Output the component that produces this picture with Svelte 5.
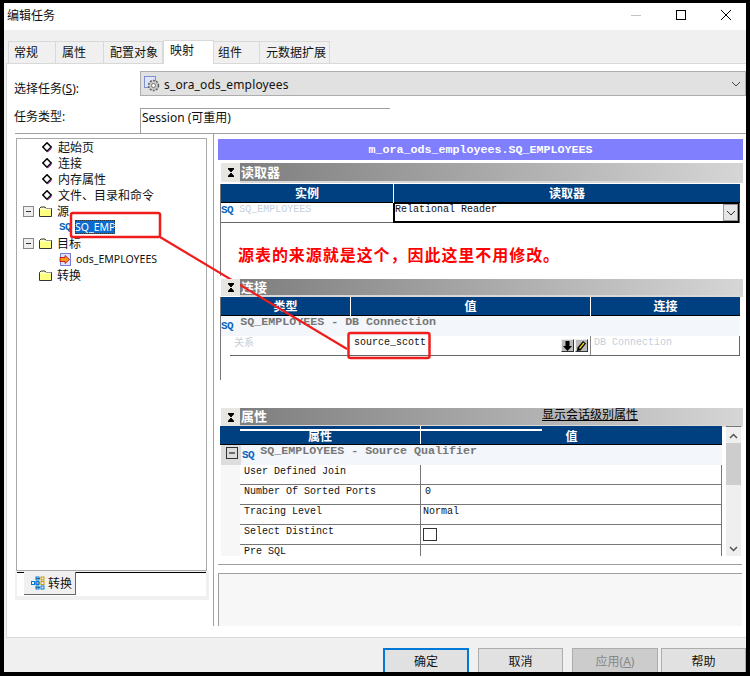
<script>
    const tabs = ['常规', '属性', '配置对象', '映射', '组件', '元数据扩展'];
    const pages = ['起始页', '连接', '内存属性', '文件、目录和命令'];
    const props = [
        { name: 'User Defined Join', value: '' },
        { name: 'Number Of Sorted Ports', value: '0', indent: true },
        { name: 'Tracing Level', value: 'Normal' },
        { name: 'Select Distinct', check: true },
        { name: 'Pre SQL', value: '' }
    ];
</script>

{#snippet diamond()}
    <svg class="tree-icon" width="10" height="11" viewBox="0 0 10 11">
        <path d="M5 .8 9.200 5 5 9.200.8 5z" fill="#fff" stroke="#000" stroke-width="1.500"/>
        <path d="M5.500 9.500 9.500 5.500V7L5.500 10.500z" fill="#7b2a8c"/>
    </svg>
{/snippet}

{#snippet folder()}
    <svg class="tree-icon" width="13" height="11" viewBox="0 0 13 11">
        <path d="M.5 2.500 2 1h4l1 1.500h5.500v8H.5z" fill="#ffff80" stroke="#333"/>
        <path d="M1 3h11" stroke="#fff"/>
    </svg>
{/snippet}

{#snippet toggle()}
    <span class="toggle">
        <svg width="9" height="9" viewBox="0 0 9 9"><path d="M2 4.500h5" stroke="#333"/></svg>
    </span>
{/snippet}

{#snippet sectionBar(label, link)}
    <div class="bar">
        <button class="bar-button" aria-label="折叠">
            <svg width="8" height="9" viewBox="0 0 8 9"><path d="M1 .5h6M1 8.500h6M1.500 1 4 4l2.500-3zM1.500 8 4 5l2.500 3z" stroke="#000" fill="#000"/></svg>
        </button>
        <div class="bar-fill">
            <span class="bar-label">{label}</span>
            {#if link}<span class="bar-link">{link}</span>{/if}
        </div>
    </div>
{/snippet}

<div class="window">
    <header class="title">
        <span>编辑任务</span>
        <div class="title-buttons">
            <svg width="12" height="12" viewBox="0 0 12 12"><path d="M1 6.500h10" stroke="#c4c4c4"/></svg>
            <svg width="12" height="12" viewBox="0 0 12 12"><rect x="1.500" y="1.500" width="9" height="9" fill="none" stroke="#000"/></svg>
            <svg width="12" height="12" viewBox="0 0 12 12"><path d="M1 1l10 10M11 1 1 11" stroke="#000"/></svg>
        </div>
    </header>

    <nav class="tabs">
        {#each tabs as tab}
            <span class="tab" class:active={tab === '映射'}>{tab}</span>
        {/each}
    </nav>

    <main class="panel">
        <div class="form-row select-row">
            <label class="form-label" for="task">选择任务(<u>S</u>):</label>
            <div class="select" id="task">
                <svg width="17" height="17" viewBox="0 0 17 17">
                    <rect x=".5" y=".5" width="11" height="11" fill="#dfe6fb" stroke="#7f8fd0"/>
                    <circle cx="9.500" cy="9.500" r="5" fill="#c8c8c8" stroke="#666" stroke-width="1.500" stroke-dasharray="2 1.200"/>
                    <circle cx="9.500" cy="9.500" r="2" fill="#fff" stroke="#777"/>
                </svg>
                <span>s_ora_ods_employees</span>
                <svg class="chevron" width="10" height="6" viewBox="0 0 10 6"><path d="M1 1l4 4 4-4" fill="none" stroke="#444"/></svg>
            </div>
        </div>
        <div class="form-row type-row">
            <span class="form-label">任务类型:</span>
            <div class="type-value">Session (可重用)</div>
        </div>

        <div class="work">
            <aside class="left">
                <div class="tree">
                    {#each pages as page}
                        <div class="node page">{@render diamond()}<span>{page}</span></div>
                    {/each}
                    <div class="node">{@render toggle()}{@render folder()}<span>源</span></div>
                    <div class="node leaf"><b class="sq">SQ</b><span class="selected">SQ_EMP</span></div>
                    <div class="node">{@render toggle()}{@render folder()}<span>目标</span></div>
                    <div class="node leaf">
                        <svg class="target" width="13" height="13" viewBox="0 0 13 13">
                            <rect x="1.500" y=".5" width="10" height="12" fill="#dfe3fa" stroke="#7a7ad8"/>
                            <path d="M1 4.500h5V2.500L10.500 6.500 6 10.500V8.500H1z" fill="#f59a1a" stroke="#c00000" stroke-width=".8"/>
                        </svg>
                        <span>ods_EMPLOYEES</span>
                    </div>
                    <div class="node no-toggle">{@render folder()}<span>转换</span></div>
                </div>
                <div class="tree-tabs">
                    <div class="tree-tabs-inner">
                        <span class="tree-tab">
                            <svg width="14" height="14" viewBox="0 0 14 14" fill="none">
                                <path d="M5 2.500h4M5 7h4M5 11.500h4M3 7h2" stroke="#555"/>
                                <rect x="5" y="1" width="3" height="3" stroke="#0078d7"/>
                                <rect x="10" y="1" width="3" height="3" stroke="#c89a00"/>
                                <rect x=".5" y="5.500" width="3" height="3" stroke="#0078d7"/>
                                <rect x="5" y="5.500" width="3" height="3" stroke="#0078d7"/>
                                <rect x="10" y="5.500" width="3" height="3" stroke="#c89a00"/>
                                <rect x="5" y="10" width="3" height="3" stroke="#0078d7"/>
                                <rect x="10" y="10" width="3" height="3" stroke="#0078d7"/>
                            </svg>
                            转换
                        </span>
                    </div>
                </div>
            </aside>

            <section class="right">
                <div class="mapping-name">m_ora_ods_employees.SQ_EMPLOYEES</div>

                <div class="section reader">
                    {@render sectionBar('读取器')}
                    <div class="section-body">
                        <div class="grid-head reader-cols">
                            <span>实例</span><span>读取器</span>
                        </div>
                        <div class="reader-row reader-cols">
                            <div class="reader-inst"><b class="sq">SQ</b><span class="muted">SQ_EMPLOYEES</span></div>
                            <div class="reader-value">
                                <span>Relational Reader</span>
                                <span class="drop">
                                    <svg width="10" height="6" viewBox="0 0 10 6"><path d="M1 1l4 4 4-4" fill="none" stroke="#333"/></svg>
                                </span>
                            </div>
                        </div>
                        <p class="note">源表的来源就是这个，因此这里不用修改。</p>
                    </div>
                </div>

                <div class="section conn">
                    {@render sectionBar('连接')}
                    <div class="section-body">
                        <div class="grid-head conn-cols">
                            <span>类型</span><span>值</span><span>连接</span>
                        </div>
                        <div class="group"><b class="sq">SQ</b><span>SQ_EMPLOYEES - DB Connection</span></div>
                        <div class="conn-row conn-cols">
                            <span class="relation">关系</span>
                            <div class="conn-value">
                                <span>source_scott</span>
                                <div class="mini-buttons">
                                    <span class="mini">
                                        <svg width="9" height="10" viewBox="0 0 9 10"><path d="M2.500 0h4v5H9L4.500 10 0 5h2.500z"/></svg>
                                    </span>
                                    <span class="mini">
                                        <svg width="9" height="10" viewBox="0 0 9 10"><path d="M6 0 9 2.500 3.500 9.500 0 10 .5 6.500z"/><path d="M6.300 1.500 7.500 2.500 3 8 2 7z" fill="#f5d000"/></svg>
                                    </span>
                                </div>
                            </div>
                            <span class="conn-type">DB Connection</span>
                        </div>
                    </div>
                </div>

                <div class="section attrs">
                    {@render sectionBar('属性', '显示会话级别属性')}
                    <div class="attrs-body">
                        <div class="attrs-table">
                            <div class="grid-head attrs-cols">
                                <span>属性</span><span>值</span>
                            </div>
                            <div class="group attrs-group">
                                <span class="gutter-toggle">
                                    <svg width="12" height="12" viewBox="0 0 12 12"><rect x=".5" y=".5" width="11" height="11" fill="none" stroke="#333"/><path d="M3 6h6" stroke="#000"/></svg>
                                </span>
                                <b class="sq">SQ</b><span>SQ_EMPLOYEES - Source Qualifier</span>
                            </div>
                            {#each props as prop}
                                <div class="attr-row attrs-cols">
                                    <span class="attr-name">{prop.name}</span>
                                    <span class="attr-value" class:indent={prop.indent}>
                                        {#if prop.check}<i class="checkbox"></i>{:else}{prop.value}{/if}
                                    </span>
                                </div>
                            {/each}
                        </div>
                        <div class="scrollbar">
                            <svg width="9" height="6" viewBox="0 0 9 6"><path d="M1 5l3.500-3.500L8 5" fill="none" stroke="#555" stroke-width="1.500"/></svg>
                            <div class="thumb"></div>
                            <svg width="9" height="6" viewBox="0 0 9 6"><path d="M1 1l3.500 3.500L8 1" fill="none" stroke="#555" stroke-width="1.500"/></svg>
                        </div>
                    </div>
                </div>

                <div class="separator"></div>
                <div class="description"></div>
            </section>
        </div>
    </main>

    <footer class="footer">
        <button class="btn primary">确定</button>
        <button class="btn">取消</button>
        <button class="btn disabled">应用(<u>A</u>)</button>
        <button class="btn">帮助</button>
    </footer>

    <!-- red notes drawn over the screenshot -->
    <svg class="annotations" width="750" height="676" viewBox="0 0 750 676">
        <path d="M160 237 347 349" stroke="#f01c1c" stroke-width="2.200"/>
        <rect x="71" y="213" width="89" height="24" rx="2" fill="none" stroke="#f01c1c" stroke-width="2.500"/>
        <rect x="348.500" y="333" width="81" height="25" rx="2" fill="none" stroke="#f01c1c" stroke-width="2.500"/>
    </svg>
</div>

<style>
    :global(body) {
        margin: 0;
    }

    .window {
        position: relative;
        box-sizing: border-box;
        width: 750px;
        height: 676px;
        display: flex;
        flex-direction: column;
        overflow: hidden;
        border: 4px solid #000;
        border-top-width: 3px;
        background: #f0f0f0;
        font-family: "Noto Sans", "Noto Sans CJK SC", sans-serif;
        font-size: 12px;
        color: #111;
    }

    .title {
        height: 27px;
        flex: none;
        display: flex;
        align-items: center;
        justify-content: space-between;
        padding-left: 3px;
        padding-bottom: 3px;
        box-sizing: border-box;
        background: #fff;
    }

    .title-buttons {
        display: flex;
        gap: 33px;
        margin-right: 14px;
        margin-top: -1px;
    }

    .tabs {
        height: 33px;
        flex: none;
        display: flex;
        align-items: flex-end;
        padding-left: 4px;
        position: relative;
        top: 1px;
    }

    .tab {
        box-sizing: border-box;
        flex: none;
        height: 23px;
        padding-left: 6px;
        line-height: 21px;
        border: 1px solid #d9d9d9;
        border-bottom: 0;
        border-left-width: 0;
        font-size: 12px;
    }

    .tab:nth-child(1) {
        width: 48px;
        padding-left: 5px;
        border-left-width: 1px;
    }

    .tab:nth-child(2) {
        width: 48px;
    }

    .tab:nth-child(3) {
        width: 59px;
    }

    .tab:nth-child(5) {
        width: 46px;
        padding-left: 4px;
    }

    .tab:nth-child(6) {
        width: 70px;
    }

    .tab.active {
        width: 51px;
        height: 24px;
        background: #fff;
        border-left-width: 1px;
        line-height: 20px;
        position: relative;
        z-index: 1;
    }

    .panel {
        box-sizing: border-box;
        height: 575px;
        flex: none;
        margin-left: 2px;
        background: #fff;
        border: 1px solid #d9d9d9;
        border-right: 0;
    }

    .form-row {
        display: flex;
        position: relative;
    }

    .form-label {
        width: 133px;
        flex: none;
        padding-left: 7px;
        box-sizing: border-box;
    }

    .select-row {
        margin-top: 7px;
        height: 25px;
    }

    .select-row .form-label {
        line-height: 36px;
    }

    .select {
        flex: 1;
        display: flex;
        align-items: center;
        gap: 3px;
        padding-left: 3px;
        padding-top: 1px;
        background: #e1e1e1;
        border: 1px solid #adadad;
        letter-spacing: .15px;
    }

    .chevron {
        margin-left: auto;
        margin-right: 4px;
    }

    .type-row {
        margin-top: 12px;
        height: 25px;
    }

    .type-row .form-label {
        line-height: 18px;
    }

    .type-value {
        width: 250px;
        padding-left: 1px;
        line-height: 17px;
        border-top: 1px solid #a0a0a0;
        border-left: 1px solid #a0a0a0;
        box-sizing: border-box;
    }

    .work {
        margin-left: 8px;
        height: 492px;
        display: flex;
        border-top: 1px solid #a0a0a0;
    }

    .left {
        flex: none;
        width: 199px;
        padding-top: 4px;
        box-sizing: border-box;
        border-right: 1px solid #a0a0a0;
    }

    .tree {
        box-sizing: border-box;
        width: 191px;
        height: 433px;
        margin-left: 1px;
        border: 1px solid #a9a9a9;
    }

    .node {
        height: 16px;
        display: flex;
        align-items: center;
        padding-left: 6px;
        white-space: nowrap;
    }

    .page {
        padding-left: 25px;
        gap: 5px;
    }

    .no-toggle {
        padding-left: 22px;
    }

    .no-toggle span,
    .node .tree-icon + span {
        margin-left: 5px;
    }

    .page .tree-icon + span {
        margin-left: 1px;
    }

    .toggle {
        width: 9px;
        height: 9px;
        display: flex;
        border: 1px solid #888;
        background: #eee;
        margin-right: 5px;
    }

    .leaf {
        padding-left: 42px;
        gap: 4px;
        font-size: 10.500px;
    }

    .sq {
        color: #0a66c2;
        font-family: "Liberation Mono", monospace;
        font-size: 11px;
        font-weight: 700;
        letter-spacing: -.5px;
    }

    .leaf .sq {
        width: 12px;
    }

    .selected {
        padding: 0;
        background: #0a6bd0;
        color: #fff;
        outline: 1px dotted #333;
        outline-offset: -1px;
    }

    .tree-tabs {
        box-sizing: border-box;
        width: 194px;
        height: 29px;
        padding: 1px 3px 4px 2px;
        background: #f0f0f0;
    }

    .tree-tabs-inner {
        height: 24px;
        padding-left: 7px;
        background: #fff;
        border-top: 1px solid #000;
        box-sizing: border-box;
    }

    .tree-tab {
        box-sizing: border-box;
        width: 52px;
        height: 23px;
        margin-top: -1px;
        padding-left: 7px;
        display: flex;
        align-items: center;
        gap: 3px;
        background: #f0f0f0;
        border-right: 1px solid #666;
        border-bottom: 1px solid #666;
    }

    .right {
        width: 525px;
        padding-left: 4px;
        padding-top: 5px;
        flex: none;
    }

    .mapping-name {
        height: 21px;
        padding-top: 1px;
        box-sizing: border-box;
        line-height: 21px;
        text-align: center;
        background: #8080ff;
        color: #fff;
        font-family: "Liberation Mono", monospace;
        font-size: 11.670px;
        font-weight: 700;
    }

    .section {
        position: relative;
        margin-left: 3px;
    }

    .reader {
        margin-top: 3px;
        height: 113px;
    }

    .conn {
        height: 126px;
        margin-top: 3px;
    }

    .attrs {
        margin-top: 3px;
        height: 148px;
    }

    .bar {
        display: flex;
        height: 18px;
    }

    .conn .bar {
        height: 16px;
    }

    .attrs .bar {
        height: 17px;
    }

    .bar-button {
        width: 19px;
        height: 19px;
        padding: 0;
        flex: none;
        display: flex;
        align-items: center;
        justify-content: center;
        border: 0;
        background: #e8e6e0;
        position: relative;
        z-index: 1;
    }

    .conn .bar-button {
        height: 17px;
    }

    .attrs .bar-button {
        height: 18px;
    }

    .bar-fill {
        flex: 1;
        display: flex;
        align-items: center;
        position: relative;
        background: linear-gradient(90deg, #7e7e7e, #d6d6d6);
        box-shadow: 0 2px 0 #d8d8d8;
    }

    .bar-label {
        color: #fff;
        font-weight: 700;
        font-size: 13px;
        padding-left: 1px;
        position: relative;
        top: -1px;
    }

    .bar-link {
        position: absolute;
        left: 302px;
        top: -1px;
        line-height: 15px;
        color: #000;
        text-decoration: underline;
    }

    .section-body {
        margin-top: 3px;
        width: 520px;
        margin-left: -1px;
        border-left: 1px solid #777;
        box-sizing: border-box;
        height: 92px;
    }

    .conn .section-body {
        height: 83px;
        margin-top: 2px;
    }

    .grid-head {
        height: 19px;
        box-sizing: border-box;
        display: grid;
        background: #004080;
        color: #fff;
        font-weight: 700;
        text-align: center;
        line-height: 19px;
        border-bottom: 1px solid #000;
        font-size: 12px;
    }

    .grid-head span + span {
        border-left: 1px solid #fff;
    }

    .reader-cols {
        grid-template-columns: 172px 1fr;
    }

    .conn-cols {
        grid-template-columns: 129px 240px 1fr;
    }

    .reader-row {
        display: grid;
        height: 20px;
        font-family: "Liberation Mono", monospace;
        font-size: 10px;
        border-bottom: 1px solid #666;
        border-right: 1px solid #666;
        box-sizing: border-box;
    }

    .reader-inst {
        display: flex;
        gap: 6px;
        align-items: flex-start;
        line-height: 13px;
    }

    .reader-inst .sq {
        margin-top: 1px;
    }

    .muted {
        color: #c4cfdc;
    }

    .reader-value {
        display: flex;
        justify-content: space-between;
        border: 2px solid #000;
        border-top-width: 1px;
        border-right-width: 1px;
        line-height: 12px;
    }

    .drop {
        width: 13px;
        height: 15px;
        align-self: flex-end;
        display: flex;
        align-items: center;
        justify-content: center;
        background: #e6e6e6;
        border: 1px solid #999;
    }

    .note {
        margin: 23px 0 0 17px;
        color: #f00;
        font-size: 16px;
        font-weight: 700;
        line-height: 18px;
        letter-spacing: .95px;
        white-space: nowrap;
    }

    .group {
        height: 20px;
        display: flex;
        gap: 7px;
        background: #f3f6fb;
        font-family: "Liberation Mono", monospace;
        font-size: 11.670px;
        font-weight: 700;
        color: #777;
        line-height: 13px;
        white-space: nowrap;
    }

    .group .sq {
        margin-top: 4px;
    }

    .conn-row {
        display: grid;
        height: 20px;
        margin-left: 9px;
        box-sizing: border-box;
        grid-template-columns: 120px 240px 1fr;
        font-family: "Liberation Mono", monospace;
        font-size: 10px;
        border-bottom: 1px solid #666;
        border-right: 1px solid #666;
    }

    .relation {
        color: #c4cfdc;
        padding-left: 4px;
        font-family: "Noto Sans CJK SC", sans-serif;
        font-size: 10px;
        line-height: 11px;
    }

    .conn-value {
        display: flex;
        justify-content: space-between;
        padding-left: 4px;
        padding-right: 2px;
        line-height: 13px;
        background: #fff;
    }

    .mini-buttons {
        display: flex;
        gap: 1px;
        align-self: flex-end;
        margin-bottom: 3px;
    }

    .mini {
        box-sizing: border-box;
        width: 13px;
        height: 13px;
        display: flex;
        align-items: center;
        justify-content: center;
        background: #bbb;
        border: 1px solid #eee;
        border-right: 1px solid #333;
        border-bottom: 1px solid #333;
    }

    .conn-type {
        color: #c4cfdc;
        padding-left: 3px;
        border-left: 1px solid #888;
        line-height: 13px;
    }

    .attrs-body {
        display: flex;
        margin-left: -1px;
        margin-top: 1px;
        height: 130px;
        gap: 4px;
    }

    .attrs-table {
        width: 502px;
        flex: none;
        overflow: hidden;
        background: linear-gradient(90deg, #fff 1px, #f7f7f7 1px, #f7f7f7 20px, #fff 20px);
    }

    .attrs .grid-head {
        line-height: 21px;
        position: relative;
        overflow: hidden;
    }

    .attrs .grid-head::before {
        content: "";
        position: absolute;
        left: 20px;
        width: 302px;
        top: 3px;
        height: 2px;
        background: #fff;
    }

    .attrs-cols {
        grid-template-columns: 200px 1fr;
    }

    .attr-row {
        display: grid;
        height: 20px;
        margin-left: 20px;
        grid-template-columns: 180px 1fr;
        font-family: "Liberation Mono", monospace;
        font-size: 10px;
        line-height: 14px;
        background: #fff;
        border-bottom: 1px solid #777;
        border-right: 1px solid #777;
        box-sizing: border-box;
    }

    .attrs-group {
        gap: 4px;
        margin-left: 1px;
    }

    .attrs-group .sq {
        margin-left: -3px;
        margin-right: 2px;
    }

    .gutter-toggle {
        box-sizing: border-box;
        width: 20px;
        height: 20px;
        padding: 2px 0 0 5px;
        background: #ddd;
        flex: none;
    }

    .attr-name {
        padding-left: 4px;
    }

    .attr-value {
        border-left: 1px solid #777;
        padding-left: 2px;
    }

    .indent {
        padding-left: 4px;
    }

    .checkbox {
        display: block;
        box-sizing: border-box;
        width: 14px;
        height: 13px;
        margin-top: 3px;
        border: 1px solid #333;
    }

    .scrollbar {
        box-sizing: border-box;
        width: 15px;
        flex: none;
        display: flex;
        flex-direction: column;
        align-items: center;
        justify-content: space-between;
        padding: 6px 0 4px;
        background: #efefef;
        position: relative;
        border-top: 1px solid #777;
    }

    .thumb {
        position: absolute;
        top: 16px;
        left: 0;
        width: 15px;
        height: 42px;
        background: #cdcdcd;
    }

    .separator {
        width: 524px;
        margin-top: 8px;
        border-top: 1px solid #a0a0a0;
    }

    .description {
        box-sizing: border-box;
        width: 524px;
        height: 53px;
        margin-top: 8px;
        background: #f7f7f7;
        border-left: 1px solid #a0a0a0;
        border-top: 1px solid #a0a0a0;
    }

    .footer {
        flex: 1;
        display: flex;
        gap: 9px;
        padding: 10px 0 0 379px;
    }

    .btn {
        box-sizing: border-box;
        width: 85px;
        height: 30px;
        padding: 0 0 5px;
        flex: none;
        background: #e1e1e1;
        border: 1px solid #adadad;
        font-family: inherit;
        font-size: 12px;
        color: #111;
    }

    .primary {
        width: 86px;
        border: 2px solid #0078d7;
    }

    .disabled {
        width: 86px;
        background: #ccc;
        color: #888;
        margin-right: -6px;
    }

    .annotations {
        position: absolute;
        left: -4px;
        top: -3px;
        pointer-events: none;
    }
</style>
